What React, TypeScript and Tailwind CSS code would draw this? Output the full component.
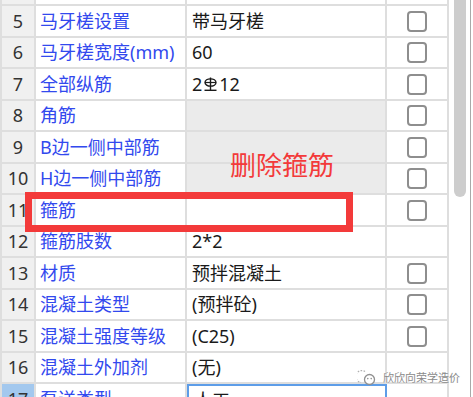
import React from "react";

type Row = {
  n: number;
  name: string;
  value: string;
  cb: boolean;
  gray?: boolean;
  bar?: boolean;
  selected?: boolean;
};

const rows: Row[] = [
  { n: 4, name: "截面高度(mm)", value: "240", cb: true },
  { n: 5, name: "马牙槎设置", value: "带马牙槎", cb: true },
  { n: 6, name: "马牙槎宽度(mm)", value: "60", cb: true },
  { n: 7, name: "全部纵筋", value: "", cb: true, bar: true },
  { n: 8, name: "角筋", value: "", cb: true, gray: true },
  { n: 9, name: "B边一侧中部筋", value: "", cb: true, gray: true },
  { n: 10, name: "H边一侧中部筋", value: "", cb: true, gray: true },
  { n: 11, name: "箍筋", value: "", cb: true },
  { n: 12, name: "箍筋肢数", value: "2*2", cb: false },
  { n: 13, name: "材质", value: "预拌混凝土", cb: true },
  { n: 14, name: "混凝土类型", value: "(预拌砼)", cb: true },
  { n: 15, name: "混凝土强度等级", value: "(C25)", cb: true },
  { n: 16, name: "混凝土外加剂", value: "(无)", cb: false },
  { n: 17, name: "泵送类型", value: "人工", cb: false, selected: true },
];

const FONT = { fontFamily: '"Noto Sans", "Noto Sans CJK SC", sans-serif' };

function BarSymbol() {
  return (
    <svg width="15" height="15" viewBox="0 0 15 15" className="mx-[1px] mt-[1px]">
      <ellipse cx="7.5" cy="5.5" rx="5.5" ry="3.6" fill="none" stroke="#1a1a1a" strokeWidth="1.4" />
      <line x1="7.5" y1="0.5" x2="7.5" y2="13.5" stroke="#1a1a1a" strokeWidth="1.4" />
      <line x1="1.5" y1="13.3" x2="13.5" y2="13.3" stroke="#1a1a1a" strokeWidth="1.4" />
      <line x1="2" y1="5.5" x2="13" y2="5.5" stroke="#1a1a1a" strokeWidth="1.2" />
    </svg>
  );
}

function CheckBox() {
  return <div className="w-[20px] h-[21px] rounded-[4px] border-2 border-[#8e8e8e] bg-white" />;
}

function TableRow({ r, i }: { r: Row; i: number }) {
  const h = i % 2 === 0 ? "h-[31px]" : "h-[32px]";
  return (
    <div className={`flex ${h}`}>
      <div
        className={`w-[36px] shrink-0 border-l-2 border-r-2 border-b-2 border-[#dedede] flex items-center justify-center text-[#333] ${
          r.selected ? "bg-[#a3c8ee]" : "bg-[#f0f0f0]"
        }`}
      >
        {r.n}
      </div>
      <div className="w-[151px] shrink-0 border-r-2 border-b-2 border-[#dedede] flex items-center pl-[4px] text-[#3249ee] whitespace-nowrap overflow-hidden">
        {r.name}
      </div>
      <div
        className={`w-[200px] shrink-0 flex items-center pl-[5px] text-[#1a1a1a] whitespace-nowrap overflow-hidden ${
          r.selected ? "border-2 border-[#5d9de8]" : "border-r-2 border-b-2 border-[#dedede]"
        } ${r.gray ? "bg-[#ebebeb]" : "bg-white"}`}
      >
        {r.bar ? (
          <span className="flex items-center">
            2
            <BarSymbol />
            12
          </span>
        ) : (
          r.value
        )}
      </div>
      <div className="w-[62px] shrink-0 border-r-2 border-b-2 border-[#dedede] flex items-center justify-center">
        {r.cb && <CheckBox />}
      </div>
    </div>
  );
}

export default function App() {
  return (
    <div className="relative w-[473px] h-[397px] overflow-hidden bg-white text-[18px]" style={FONT}>
      <div className="flex h-full">
        <div className="w-[449px] h-full overflow-hidden">
          <div className="-mt-[25px]">
            {rows.map((r, i) => (
              <TableRow key={r.n} r={r} i={i} />
            ))}
          </div>
        </div>
        <div className="flex-1 h-full flex">
          <div className="w-[5px]" />
          <div className="w-[12px] h-[197px] bg-[#cdcdcd] rounded-b-[6px]" />
          <div className="w-[4px]" />
          <div className="w-[1px] h-full bg-[#a9a9a9]" />
        </div>
      </div>

      {/* red annotation box */}
      <div className="absolute left-[25px] top-[192px] w-[328px] h-[40px] border-[7px] border-[#f33a3a]" />
      <div className="absolute left-[230px] top-[150px] text-[26px] leading-[30px] text-[#f33a3a] whitespace-nowrap">
        删除箍筋
      </div>

      {/* watermark */}
      <div className="absolute left-[357px] top-[369px] flex items-center gap-[6px] text-[#8a8a8a]">
        <svg width="20" height="18" viewBox="0 0 20 18">
          <path d="M8 2.5 A6 6 0 1 0 4 13.5" fill="none" stroke="#b0b0b0" strokeWidth="1.2" strokeDasharray="1.6 1.4" />
          <circle cx="12.5" cy="10.5" r="5" fill="white" stroke="#909090" strokeWidth="1.3" />
          <circle cx="10.8" cy="9.6" r="0.8" fill="#909090" />
          <circle cx="14.2" cy="9.6" r="0.8" fill="#909090" />
        </svg>
        <span className="text-[11px] leading-[14px] [text-shadow:0_0_2px_#fff]">欣欣向荣学造价</span>
      </div>
    </div>
  );
}
